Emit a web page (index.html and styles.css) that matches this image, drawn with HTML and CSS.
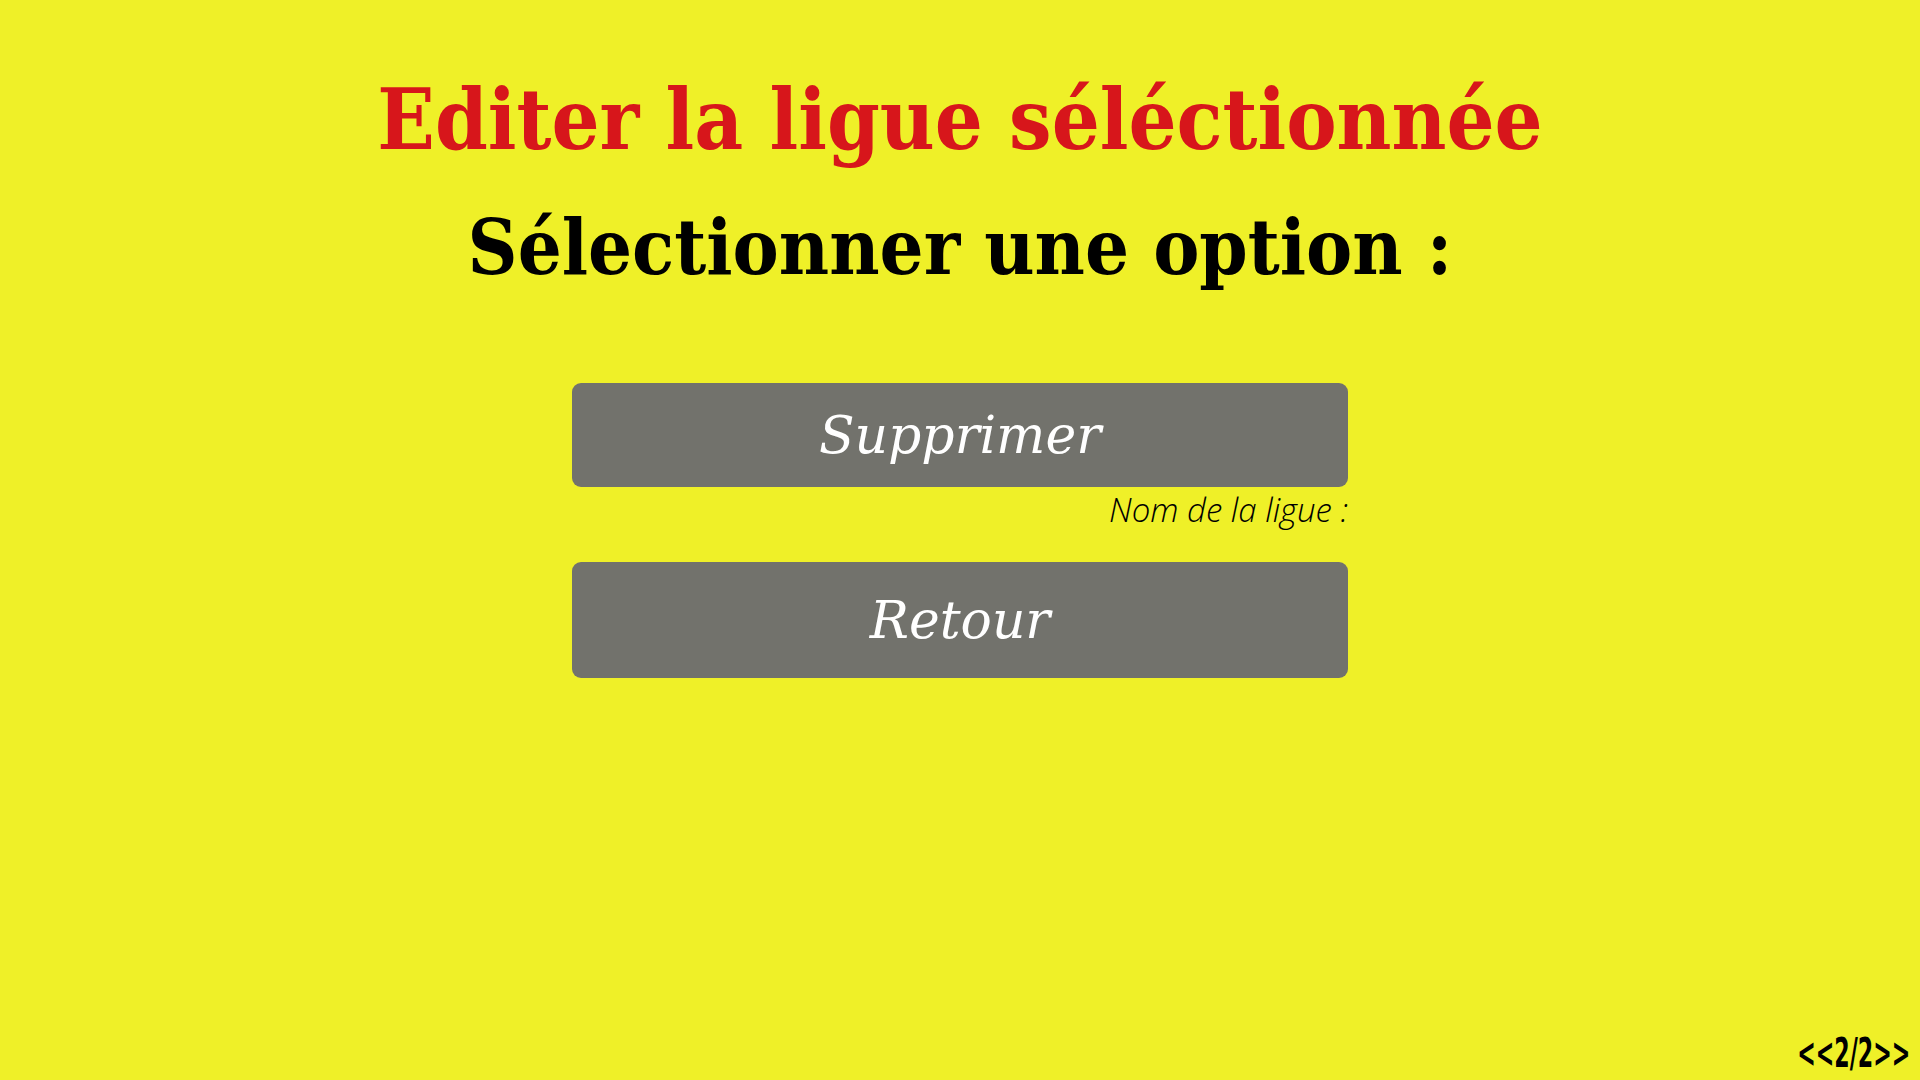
FILE: index.html
```html
<!DOCTYPE html>
<html lang="fr">
<head>
<meta charset="utf-8">
<title>Editer la ligue</title>
<link rel="stylesheet" href="styles.css">
</head>
<body>
<main class="page">
  <h1 class="title">Editer la ligue séléctionnée</h1>
  <h2 class="subtitle">Sélectionner une option :</h2>
  <div class="options">
    <button class="btn btn-delete">Supprimer</button>
    <div class="field-label">Nom de la ligue :</div>
    <button class="btn btn-back">Retour</button>
  </div>
  <footer class="pager">&lt;&lt;2/2&gt;&gt;</footer>
</main>
</body>
</html>
```
FILE: styles.css
```css
html, body {
  margin: 0;
  padding: 0;
}
body {
  background: #eff028;
}
.page {
  display: flex;
  flex-direction: column;
  align-items: center;
  min-height: 100vh;
  box-sizing: border-box;
  padding-top: 78px;
}
.title, .subtitle {
  margin: 0;
  font-family: "DejaVu Serif", serif;
  font-stretch: condensed;
  font-weight: bold;
  line-height: 1;
  text-align: center;
  white-space: nowrap;
}
.title {
  color: #d7161b;
  font-size: 84px;
}
.subtitle {
  color: #000;
  font-size: 77px;
  margin-top: 47px;
}
.options {
  margin-top: 97px;
  width: 776px;
  display: flex;
  flex-direction: column;
}
.btn {
  border: 0;
  border-radius: 9px;
  background: #72726c;
  color: #fff;
  font-family: "DejaVu Serif", serif;
  font-style: italic;
  font-size: 52px;
  width: 100%;
  padding: 0;
  cursor: pointer;
}
.btn-delete {
  height: 104px;
}
.btn-back {
  height: 116px;
  margin-top: 30px;
}
.field-label {
  font-family: "Open Sans", sans-serif;
  font-style: italic;
  font-weight: 300;
  font-size: 33px;
  line-height: 45px;
  text-align: right;
  color: #000;
}
.pager {
  margin-top: auto;
  align-self: flex-end;
  padding: 0 17px 6px 0;
  font-family: "DejaVu Sans", sans-serif;
  font-stretch: condensed;
  font-weight: bold;
  font-size: 41px;
  line-height: 1;
  color: #000;
  transform: scaleX(0.6);
  transform-origin: right bottom;
}
```
